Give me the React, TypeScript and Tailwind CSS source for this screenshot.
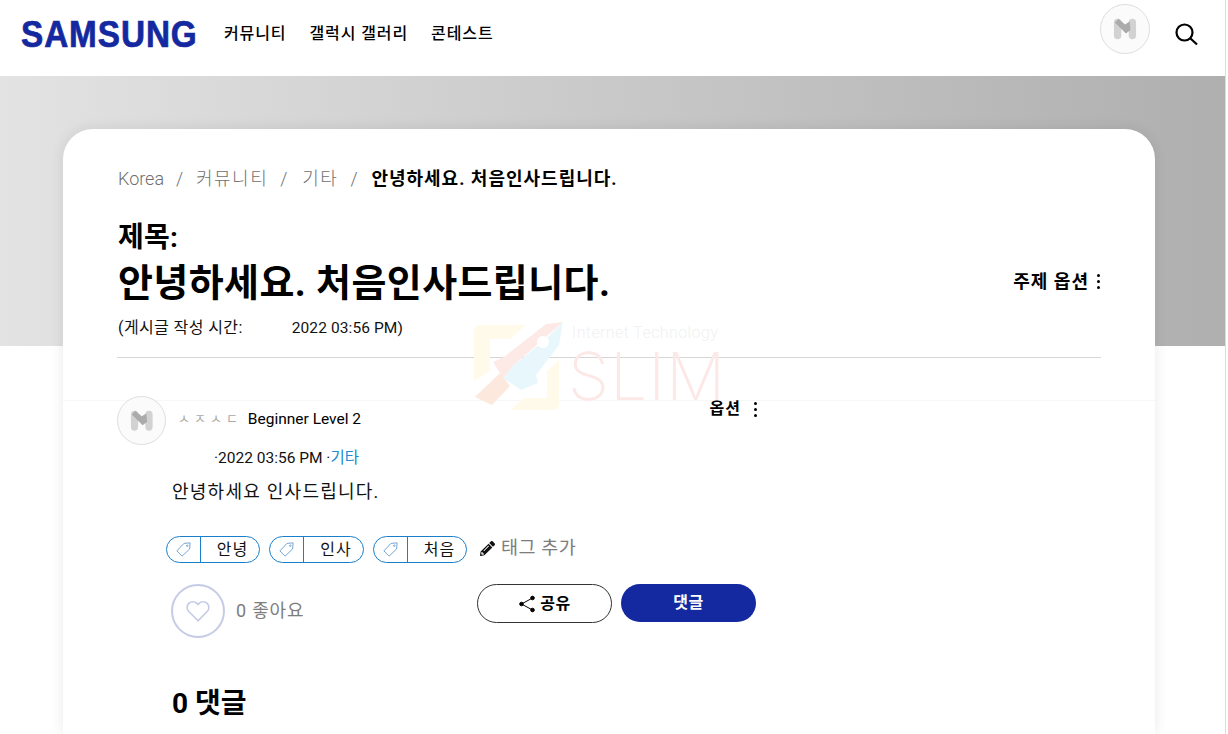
import { FaPencilAlt } from "react-icons/fa";

const font = "font-['Roboto','Noto_Sans_CJK_KR',sans-serif]";

function Avatar({ size }: { size: string }) {
  return (
    <div className={`${size} rounded-full border border-[#dedede] bg-[#fbfbfb] flex items-center justify-center shrink-0`}>
      <svg viewBox="0 0 26 22" className="w-1/2 h-1/2">
        <rect x="1" y="0" width="8" height="22" rx="4" fill="#d2d2d2" />
        <rect x="17" y="0" width="8" height="22" rx="4" fill="#d2d2d2" />
        <path d="M2 4 L6 0 L13 6 L18 3 L19 12 L14 16 Z" fill="#ababab" />
      </svg>
    </div>
  );
}

function Dots({ className }: { className: string }) {
  return (
    <span className={`inline-flex flex-col gap-[3px] ${className}`}>
      <i className="block w-[3px] h-[3px] rounded-full bg-black" />
      <i className="block w-[3px] h-[3px] rounded-full bg-black" />
      <i className="block w-[3px] h-[3px] rounded-full bg-black" />
    </span>
  );
}

function Tag({ label, width }: { label: string; width: string }) {
  return (
    <div className={`${width} h-[27px] flex items-center rounded-full border border-[#1a7fcb] bg-white`}>
      <div className="w-[34px] h-full flex items-center justify-center border-r border-[#1a7fcb] shrink-0">
        <svg viewBox="0 0 18 18" className="w-[17px] h-[17px]" fill="none" stroke="#6f9fd0" strokeWidth="1">
          <path d="M16 2 L15.5 8.5 L7.5 16 L2 10.5 L9.5 2.5 Z" />
          <circle cx="13" cy="5" r="0.8" />
        </svg>
      </div>
      <span className="flex-1 pl-[5px] text-center text-[16px] leading-none tracking-[1px] text-[#111]">{label}</span>
    </div>
  );
}

function Watermark() {
  return (
    <div className="absolute left-[474px] top-[321px] w-[250px] h-[92px] pointer-events-none">
      <svg viewBox="0 0 90 92" className="absolute left-0 top-0 w-[90px] h-[92px]">
        <path d="M0 10 a6 6 0 0 1 6-6 H52 L36 18 H16 V50 L0 60 Z" fill="#fffaea" />
        <path d="M85 39 V84 a5 5 0 0 1 -5 5 H36 L50 77 H73 V50 Z" fill="#fffaea" />
        <path d="M89 1 L72 3 L30 36 L19 41 L29 57 L40 44 Z" fill="#fdeae6" />
        <path d="M89 1 L85 24 L62 54 L64 62 L47 69 L29 57 L40 44 L72 18 Z" fill="#e8f7fc" />
        <circle cx="69" cy="21" r="6" fill="#ffffff" />
        <path d="M26 52 L36 65 L18 84 L1 76 Z" fill="#fde8de" />
      </svg>
      <div className="absolute left-[98px] top-[4px] text-[16px] font-light leading-[16px] tracking-[0.4px] text-[#f1f1f1] whitespace-nowrap">
        Internet Technology
      </div>
      <div className="absolute left-[94px] top-[33px] font-['Inter',sans-serif] font-extralight text-[66px] leading-[44px] tracking-[1px] text-[#fde8e8] whitespace-nowrap">
        SLIM
      </div>
    </div>
  );
}

export default function App() {
  return (
    <div className={`${font} relative h-[734px] w-[1228px] overflow-hidden bg-white text-black`}>
      <div className="absolute right-[2px] top-0 bottom-0 w-[1px] bg-[#dcdcdc]" />
      <header className="flex h-[76px] w-[1225px] items-center pl-[21px] pr-[27px] bg-white">
        <div className="font-['Liberation_Sans',sans-serif] font-bold text-[36px] leading-none tracking-[1px] [-webkit-text-stroke:0.7px_#1428a0] text-[#1428a0] [transform:scaleX(0.925)] origin-left w-[179px] -mt-[6px]">
          SAMSUNG
        </div>
        <nav className="ml-[24px] flex items-center gap-[23px] text-[16px] font-medium leading-none tracking-[0.9px] -mt-[9px]">
          <span>커뮤니티</span>
          <span>갤럭시 갤러리</span>
          <span>콘테스트</span>
        </nav>
        <div className="ml-auto flex items-center gap-[24px] -mt-[18px]">
          <Avatar size="w-[50px] h-[50px]" />
          <svg viewBox="0 0 24 24" className="w-[24px] h-[24px] mt-[10px]" fill="none" stroke="#000" strokeWidth="2.2">
            <circle cx="10.5" cy="10.5" r="8" />
            <path d="M16.5 16.5 L23 22.5" />
          </svg>
        </div>
      </header>

      <div className="h-[270px] w-[1225px] bg-gradient-to-r from-[#e3e3e3] to-[#afafaf]" />

      <main className="relative ml-[63px] -mt-[217px] h-[605px] w-[1092px] rounded-t-[30px] bg-white shadow-[0_0_14px_rgba(0,0,0,0.09)]">
        <section className="px-[54px] pt-[37px]">
          <div className="flex items-center text-[18px] font-light leading-[26px] text-[#6f6f6f] h-[26px]">
            <span className="ml-[1px] w-[45px]">Korea</span>
            <span className="ml-[13px] w-[20px]">/</span>
            <span className="tracking-[1.5px]">커뮤니티</span>
            <span className="ml-[12px] w-[22px]">/</span>
            <span className="tracking-[1.5px]">기타</span>
            <span className="ml-[12px] w-[21px]">/</span>
            <span className="text-[18px] font-bold tracking-[1px] text-black">안녕하세요. 처음인사드립니다.</span>
          </div>
          <h2 className="mt-[27px] ml-[1px] text-[28px] font-bold leading-[38px] tracking-[0.3px]">제목:</h2>
          <div className="-mt-[2px] flex items-center justify-between">
            <h1 className="ml-[1px] text-[38px] font-bold leading-[56px] tracking-[0.4px]">안녕하세요. 처음인사드립니다.</h1>
            <div className="-mt-[4px] flex items-center gap-[8px] text-[18px] font-bold tracking-[1px]">
              <span>주제 옵션</span>
              <Dots className="mr-[1px]" />
            </div>
          </div>
          <p className="mt-[6px] ml-[1px] text-[15.5px] leading-[22px] tracking-[0.1px] text-[#111]">
            <span className="text-[16px] tracking-[0.4px]">(게시글 작성 시간:</span>
            <span className="ml-[49px]">2022 03:56 PM)</span>
          </p>
          <div className="mt-[18px] h-px bg-[#d6d6d6]" />
        </section>

        <section className="mt-[42px] border-t border-[#f7f7f7] px-[54px]">
          <div className="flex w-[640px] items-start -mt-[5px]">
            <Avatar size="w-[49px] h-[49px]" />
            <span className="ml-[12px] mt-[13px] text-[13px] leading-[20px] tracking-[4px] text-[#a8a8a8]">ㅅㅈㅅㄷ</span>
            <span className="ml-[6px] mt-[13px] text-[15.5px] leading-[20px]">Beginner Level 2</span>
            <div className="ml-auto mt-[2px] flex items-center gap-[13px] text-[16px] font-bold leading-[22px] tracking-[1px]">
              <span>옵션</span>
              <Dots className="" />
            </div>
          </div>
          <div className="ml-[97px] mt-[2px] text-[15.5px] leading-[22px] text-[#111]">
            ·2022 03:56 PM ·<span className="text-[#2189cf]">기타</span>
          </div>
          <p className="ml-[55px] mt-[11px] text-[18px] leading-[24px] tracking-[1.25px] text-[#111]">안녕하세요 인사드립니다.</p>

          <div className="ml-[49px] mt-[32px] flex items-center gap-[9px]">
            <Tag label="안녕" width="w-[94px]" />
            <Tag label="인사" width="w-[95px]" />
            <Tag label="처음" width="w-[94px]" />
            <div className="ml-[4px] flex items-center gap-[6px] text-[18.5px] leading-[24px] tracking-[0.5px] text-[#7d7d7d] -mt-[4px]">
              <FaPencilAlt className="w-[15px] h-[15px] text-[#111] mt-[2px]" />
              <span>태그 추가</span>
            </div>
          </div>

          <div className="ml-[54px] mt-[21px] flex h-[54px] w-[585px] items-start">
            <div className="flex h-[54px] w-[54px] items-center justify-center rounded-full border-2 border-[#c5cbe6]">
              <svg viewBox="0 0 24 24" className="w-[26px] h-[26px]" fill="none" stroke="#c5cbe6" strokeWidth="1.5">
                <path d="M12 21 L3.5 12.5 a5.4 5.4 0 0 1 0-7.5 a5.3 5.3 0 0 1 7.5 0 L12 6 l1-1 a5.3 5.3 0 0 1 7.5 0 a5.4 5.4 0 0 1 0 7.5 Z" />
              </svg>
            </div>
            <span className="ml-[11px] mt-[14px] text-[18px] leading-[26px] tracking-[0.8px] text-[#7d7d7d]">0 좋아요</span>
            <div className="ml-auto flex gap-[9px]">
              <button className="flex h-[39px] w-[135px] items-center justify-center gap-[4px] rounded-full border border-[#333] bg-white text-[16px] font-bold leading-none tracking-[0.5px]">
                <svg viewBox="0 0 18 18" className="w-[18px] h-[18px]" fill="#000" stroke="#000" strokeWidth="1">
                  <circle cx="14.5" cy="3" r="1.8" />
                  <circle cx="3.5" cy="9" r="1.8" />
                  <circle cx="14.5" cy="15" r="1.8" />
                  <path d="M14.5 3 L3.5 9 L14.5 15" fill="none" />
                </svg>
                <span>공유</span>
              </button>
              <button className="flex h-[38px] w-[135px] items-center justify-center rounded-full bg-[#1428a0] text-[16px] font-bold leading-none tracking-[0.5px] text-white">
                댓글
              </button>
            </div>
          </div>

          <h3 className="ml-[55px] mt-[43px] text-[28px] font-bold leading-[46px]">0 댓글</h3>
        </section>
      </main>

      <Watermark />
    </div>
  );
}
